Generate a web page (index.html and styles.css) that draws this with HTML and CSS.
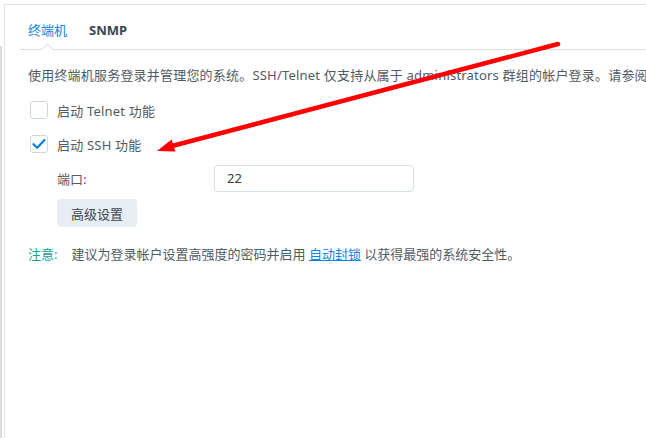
FILE: index.html
```html
<!DOCTYPE html>
<html lang="zh-CN">
<head>
  <meta charset="UTF-8">
  <title>终端机</title>
  <link rel="stylesheet" href="styles.css">
</head>
<body>
  <div class="page">
    <div class="edge"><div class="scroll-strip"></div></div>
    <div class="panel">
      <div class="tabs">
        <div class="tab active">终端机</div>
        <div class="tab">SNMP</div>
      </div>

      <div class="content">
        <p class="desc">使用终端机服务登录并管理您的系统。SSH/Telnet 仅支持从属于 administrators 群组的帐户登录。请参阅</p>

        <label class="check-row">
          <span class="box"></span>
          <span>启动 Telnet 功能</span>
        </label>
        <label class="check-row">
          <span class="box checked">
            <svg width="14" height="12" viewBox="0 0 14 12"><path d="M1.5 6.2 L5.2 9.8 L12.5 2" fill="none" stroke="#0a7fdc" stroke-width="2.2" stroke-linecap="round" stroke-linejoin="round"/></svg>
          </span>
          <span>启动 SSH 功能</span>
        </label>

        <div class="field-row">
          <span class="field-label">端口:</span>
          <div class="input">22</div>
        </div>

        <button class="btn">高级设置</button>

        <p class="note"><span class="note-tag">注意:</span>建议为登录帐户设置高强度的密码并启用 <a href="#">自动封锁</a> 以获得最强的系统安全性。</p>
      </div>
    </div>
  </div>

  <!-- annotation arrow -->
  <svg class="arrow" width="646" height="438" viewBox="0 0 646 438">
    <line x1="558" y1="44" x2="172" y2="146" stroke="#ff0000" stroke-width="4.5" stroke-linecap="round"/>
    <polygon points="157,151 175.5,151.5 171.5,139.5" fill="#ff0000"/>
  </svg>
</body>
</html>
```

FILE: styles.css
```css
body {
  margin: 0;
  background: #fff;
  height: 438px;
  overflow: hidden;
  position: relative;
  font-family: "Noto Sans", "Noto Sans CJK SC", sans-serif;
  font-size: 13px;
  color: #505a64;
}

.page {
  display: flex;
  height: 100%;
}

.edge {
  width: 4px;
  flex-shrink: 0;
  display: flex;
  flex-direction: column;
}

.scroll-strip {
  width: 2px;
  flex: 1;
  margin-top: 46px;
  background: #dcdcdc;
}

.panel {
  flex: 1;
  margin-top: 4px;
  border-top: 1px solid #dde4ec;
  border-left: 1px solid #dde4ec;
  padding-left: 15px;
  min-width: 0;
  overflow: hidden;
}

/* tabs */
.tabs {
  display: flex;
  border-bottom: 1px solid #d7dfe8;
  height: 44px;
  align-items: flex-end;
}

.tab {
  position: relative;
  padding: 0 8px 10px;
  margin-right: 6px;
  line-height: 18px;
  font-weight: bold;
  color: #3c4650;
}

.tab.active {
  color: #0a86e6;
  font-weight: normal;
}

.tab.active::after {
  content: "";
  position: absolute;
  left: 50%;
  bottom: -5px;
  width: 8px;
  height: 8px;
  margin-left: -5px;
  background: #fff;
  border-top: 1px solid #d7dfe8;
  border-left: 1px solid #d7dfe8;
  transform: rotate(45deg);
}

/* content */
.content {
  padding-left: 8px;
}

.desc {
  margin: 16px 0 0;
  line-height: 18px;
  white-space: nowrap;
  letter-spacing: 0.2px;
}

.check-row {
  display: flex;
  align-items: center;
  height: 34px;
  gap: 9px;
  letter-spacing: 0.2px;
}

.check-row:first-of-type {
  margin-top: 9px;
}

.box {
  width: 16px;
  height: 16px;
  margin-left: 2px;
  border: 1px solid #cdd5de;
  border-radius: 3px;
  display: flex;
  align-items: center;
  justify-content: center;
}

.field-row {
  display: flex;
  align-items: center;
  margin: 4px 0 0 29px;
}

.field-label {
  width: 157px;
}

.input {
  width: 186px;
  height: 25px;
  line-height: 25px;
  padding-left: 12px;
  border: 1px solid #d6e0ea;
  border-radius: 4px;
  color: #333c46;
}

.btn {
  display: block;
  margin: 7px 0 0 29px;
  height: 28px;
  padding: 0 14px;
  border: none;
  border-radius: 4px;
  background: #e8edf3;
  font-family: inherit;
  font-size: 13px;
  color: #3c4650;
}

.note {
  margin: 18px 0 0;
  line-height: 18px;
  white-space: nowrap;
}

.note-tag {
  color: #14a0a0;
  margin-right: 14px;
}

.note a {
  color: #0a86e6;
}

.arrow {
  position: absolute;
  left: 0;
  top: 0;
  pointer-events: none;
}
```
